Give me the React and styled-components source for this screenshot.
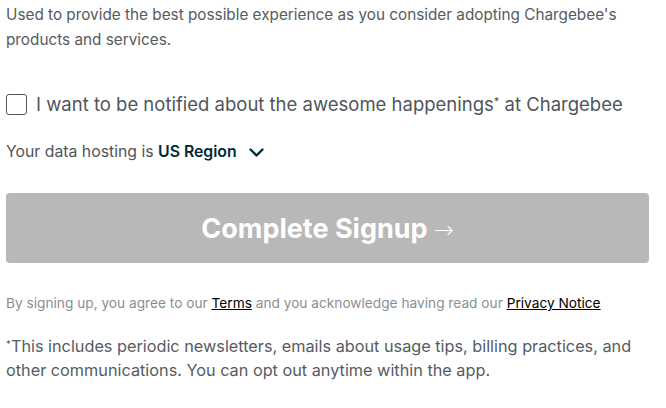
import styled, { createGlobalStyle } from 'styled-components';

const GlobalStyle = createGlobalStyle`
    body {
        margin: 0;
        background: #fff;
        font-family: Inter, "Noto Sans", sans-serif;
    }
`;

const App = () => {
    return (
        <>
            <GlobalStyle />
            <Wrapper>
                <Intro>
                    Used to provide the best possible experience as you consider adopting Chargebee's products and services.
                </Intro>
                <CheckRow>
                    <Box type="checkbox" />
                    <CheckLabel>
                        I want to be notified about the awesome happenings<Star>*</Star> at Chargebee
                    </CheckLabel>
                </CheckRow>
                <Hosting>
                    Your data hosting is <Region>US Region</Region>
                    <Chevron width="15" height="9" viewBox="0 0 15 9">
                        <path d="M1.5 1.5l6 6 6-6" fill="none" stroke="#012a38" strokeWidth="2.4" strokeLinecap="round" strokeLinejoin="round" />
                    </Chevron>
                </Hosting>
                <SubmitButton type="button" disabled>
                    Complete Signup<Arrow>→</Arrow>
                </SubmitButton>
                <Legal>
                    By signing up, you agree to our <Link href="#">Terms</Link> and you acknowledge having read our <Link href="#">Privacy Notice</Link>
                </Legal>
                <Footnote>
                    <Star>*</Star>This includes periodic newsletters, emails about usage tips, billing practices, and other communications. You can opt out anytime within the app.
                </Footnote>
            </Wrapper>
        </>
    );
};

const Wrapper = styled.div`
    width: 643px;
    padding: 2px 6px 0;
    display: flex;
    flex-direction: column;
`;

const Intro = styled.p`
    margin: 0;
    font-size: 15.3px;
    line-height: 25px;
    color: #555b61;
`;

const CheckRow = styled.label`
    display: flex;
    align-items: center;
    gap: 9px;
    margin-top: 40px;
    cursor: pointer;
`;

const Box = styled.input`
    appearance: none;
    margin: 0;
    width: 21px;
    height: 21px;
    border: 1.5px solid #555;
    border-radius: 3px;
    background: #fff;
    flex-shrink: 0;
`;

const CheckLabel = styled.span`
    font-size: 18.5px;
    line-height: 24px;
    color: #4f555b;
`;

const Star = styled.span`
    position: relative;
    top: -0.45em;
    font-size: 0.6em;
    line-height: 0;
`;

const Hosting = styled.div`
    display: flex;
    align-items: center;
    margin-top: 24px;
    font-size: 15.8px;
    line-height: 24px;
    color: #4f555b;
    white-space: pre;
`;

const Region = styled.span`
    font-weight: 600;
    color: #012a38;
`;

const Chevron = styled.svg`
    margin-left: 12px;
`;

const SubmitButton = styled.button`
    margin-top: 29px;
    height: 70px;
    width: 100%;
    border: none;
    border-radius: 4px;
    background: #b8b8b8;
    color: #fff;
    font-family: Inter, "Noto Sans", sans-serif;
    font-size: 27px;
    font-weight: 700;
    letter-spacing: 0;
    cursor: not-allowed;
`;

const Arrow = styled.span`
    font-family: "DejaVu Sans", sans-serif;
    font-weight: 300;
    font-size: 24px;
    margin-left: 6px;
`;

const Legal = styled.p`
    margin: 30px 0 0;
    font-size: 13.7px;
    line-height: 20px;
    color: #8a8f94;
`;

const Link = styled.a`
    color: #000;
    text-decoration: underline;
`;

const Footnote = styled.p`
    margin: 21px 0 0;
    font-size: 16.25px;
    line-height: 24px;
    color: #555b61;
`;

export default App;
